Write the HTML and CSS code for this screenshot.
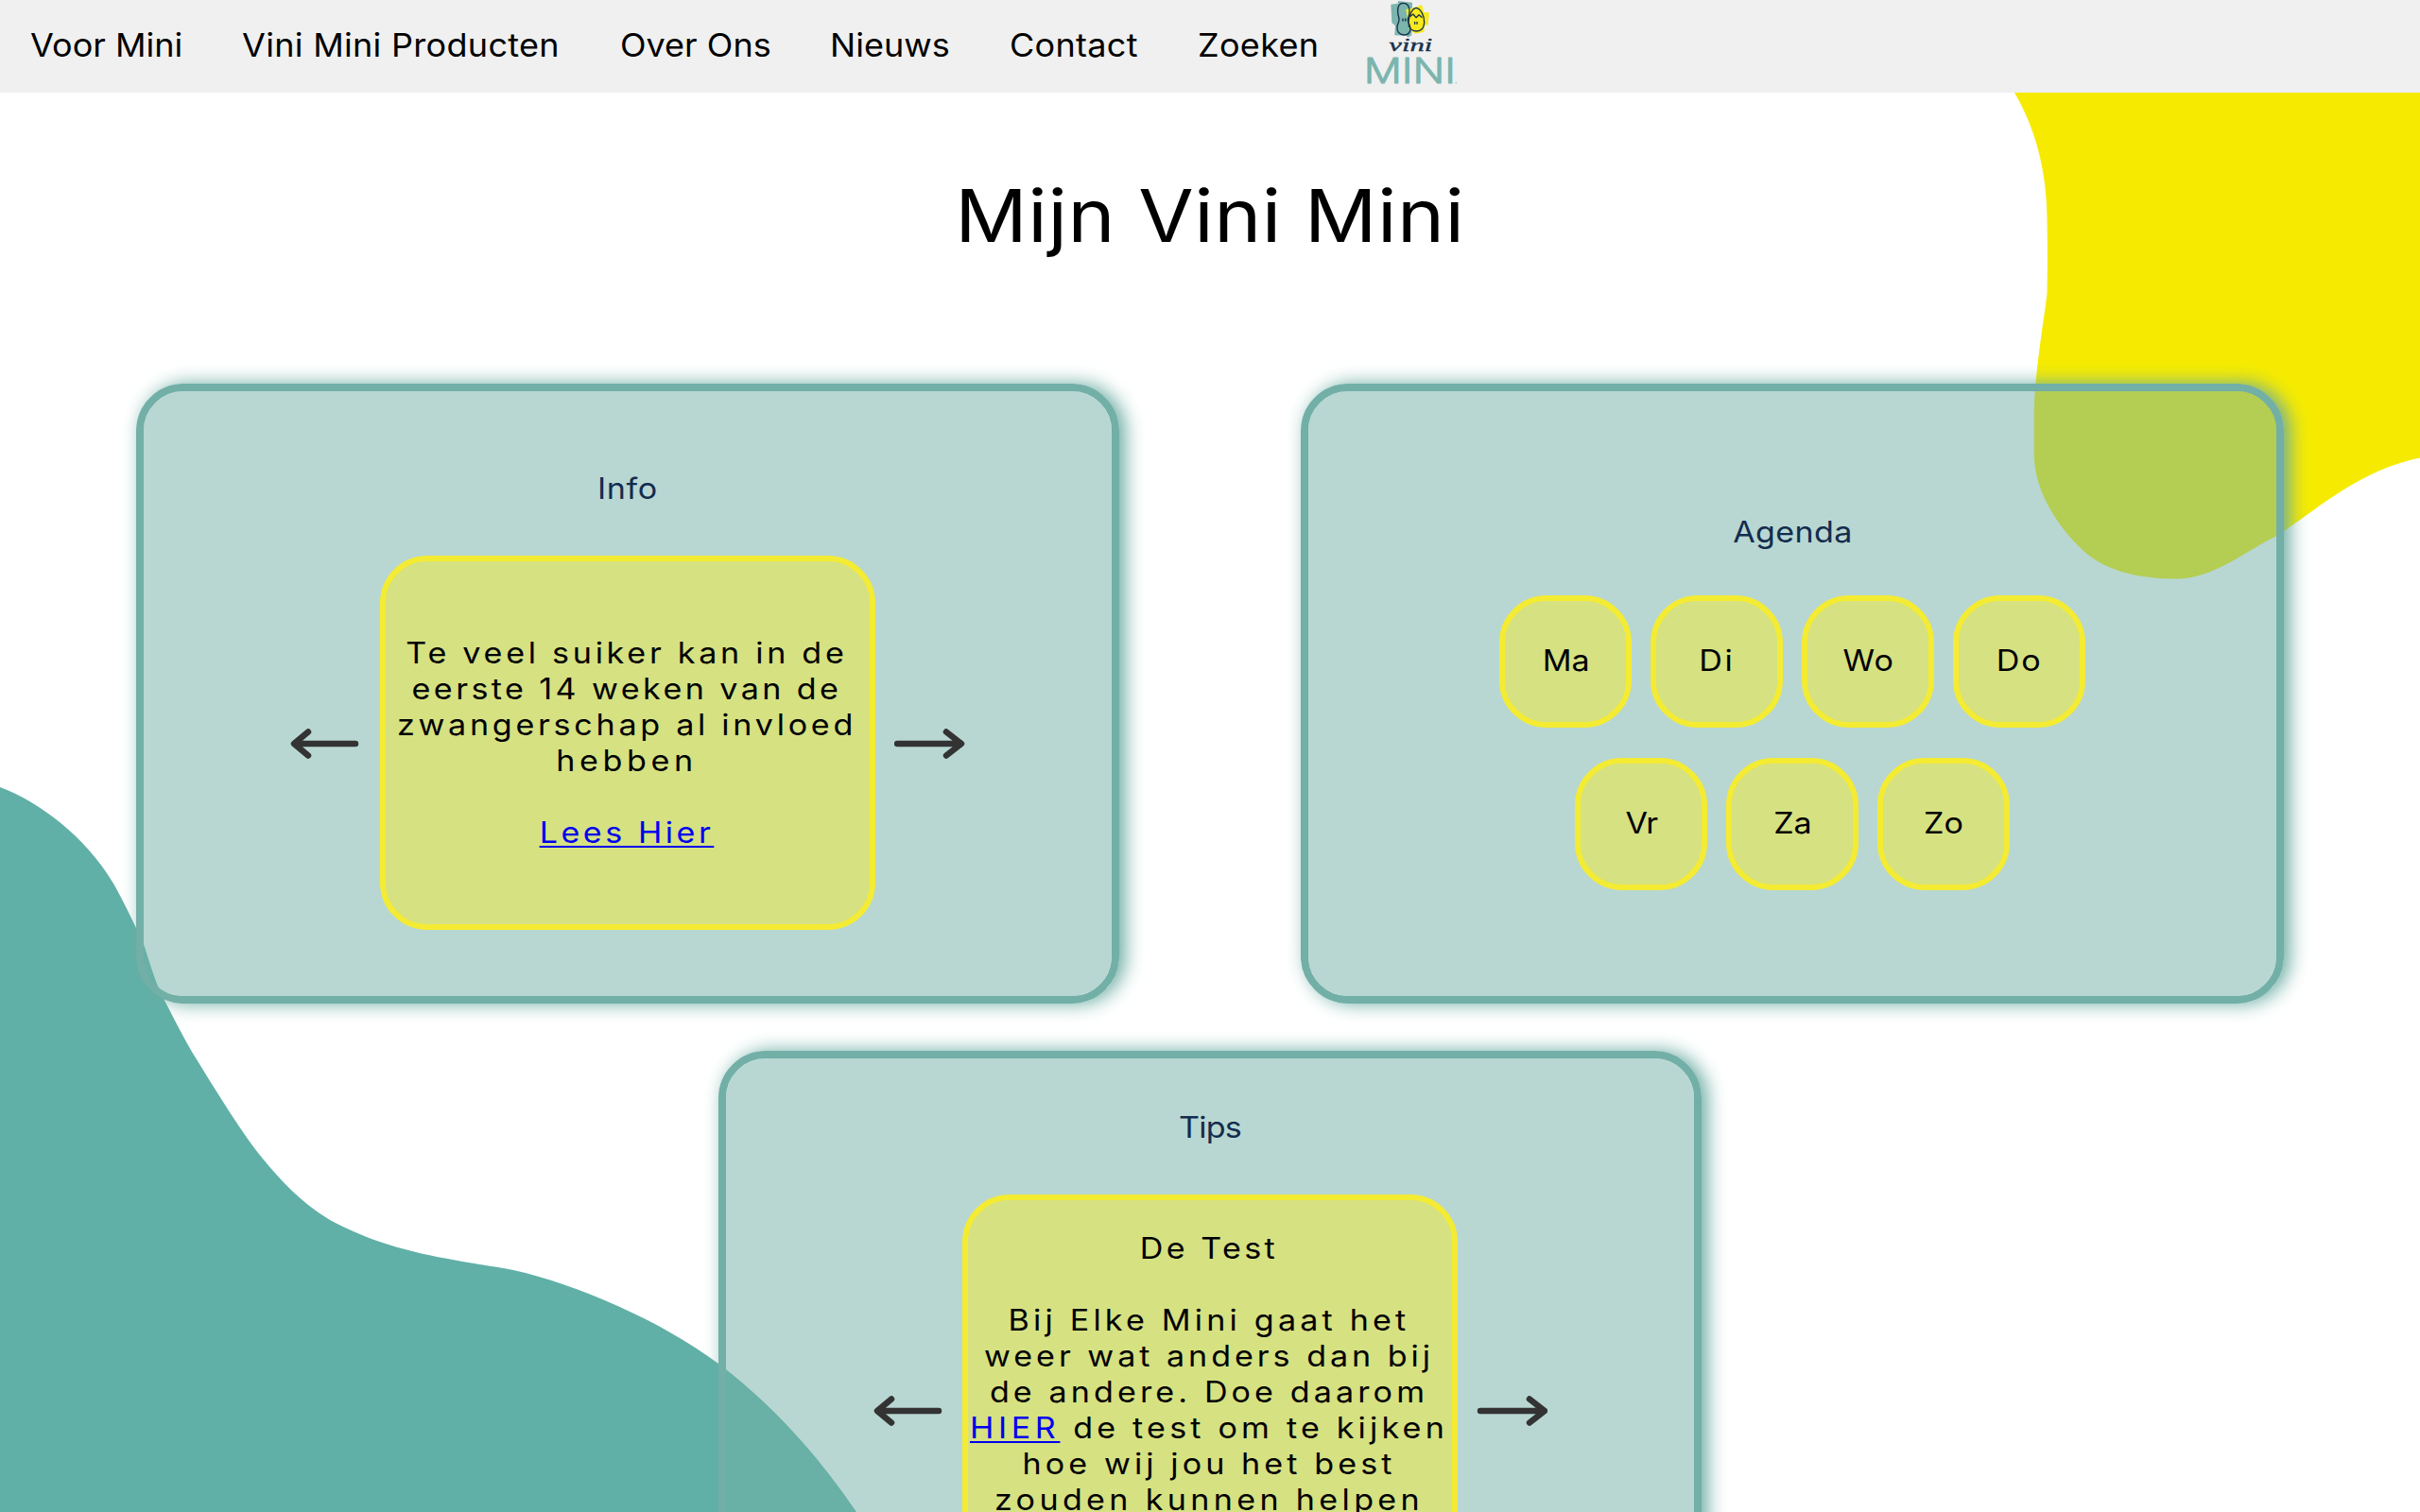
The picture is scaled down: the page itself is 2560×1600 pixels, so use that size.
FILE: index.html
```html
<!DOCTYPE html>
<html lang="nl">
<head>
<meta charset="utf-8">
<title>Mijn Vini Mini</title>
<link rel="stylesheet" href="styles.css">
</head>
<body>
<svg class="blobs" viewBox="0 0 2560 1600" aria-hidden="true">
  <path fill="#f6eb00" d="M2131 98C2146 124 2165 166 2165.500 232C2166 260 2166 285 2165.500 310C2163 335 2151.700 395 2151.700 445V480C2151.700 528 2188 570 2210 588C2230 603 2255 609 2275 611C2290 613 2305 613 2318 611C2352 604 2378 582 2406.700 568C2445 545 2492 498 2560 484.600V98Z"/>
  <path fill="#60b0a7" d="M0 833C40 848 90 884 120 935C132 956 147 988 152 999C158 1018 163 1034 168 1046C176 1063 190 1090 203 1113C226 1150 250 1190 273 1220C305 1260 333 1285 367 1300C425 1327 475 1332 543 1344C610 1359 700 1398 760 1443C820 1489 865 1540 906 1600H0Z"/>
</svg>

<nav class="nav">
  <a class="nav-link"><span class="nav-text">Voor Mini</span></a>
  <a class="nav-link"><span class="nav-text wide">Vini Mini Producten</span></a>
  <a class="nav-link"><span class="nav-text">Over Ons</span></a>
  <a class="nav-link"><span class="nav-text">Nieuws</span></a>
  <a class="nav-link"><span class="nav-text wide">Contact</span></a>
  <a class="nav-link"><span class="nav-text wide">Zoeken</span></a>
  <svg class="logo" viewBox="0 0 390 294" role="img" aria-label="Vini Mini">
    <path fill="#7cb5ad" d="M124 14L146 11L147 3L192 8L190 112L178 119L173 113L136 112L138 82L127 72Z"/>
    <path fill="#f8ea1c" d="M172 30L192 26L222 15L229 39L246 40L242 79L231 81L229 101L202 107L182 92Z"/>
    <path class="logo-line" d="M146 34C146 16 152 10 163 10C176 10 183 20 183 36C183 50 178 54 178 64C178 72 187 80 186 94C184 107 175 111 165 111C150 110 143 100 144 86C145 74 150 72 150 62C150 52 145 48 146 34Z"/>
    <path class="logo-line" d="M205 25C218 27 231 50 230 72C229 90 219 99 205 99C189 99 179 88 180 70C181 50 192 25 205 25ZM186 52L195 45L204 56L213 47L222 55"/>
    <path class="logo-line" d="M162 60V66M170 60V66M200 70V76M207 70V76"/>
    <text class="logo-script" x="118" y="163" textLength="138" lengthAdjust="spacingAndGlyphs">vini</text>
    <text class="logo-word" x="38" y="264" textLength="292" lengthAdjust="spacingAndGlyphs">MINI</text>
    <circle cx="331" cy="263" r="2.500" fill="#a9cdc8"/>
  </svg>
</nav>

<main class="page">
  <h1 class="title">Mijn Vini Mini</h1>
  <div class="cards">
    <section class="card card-info">
      <h2 class="card-title info-title">Info</h2>
      <div class="slider">
        <svg class="arrow" viewBox="0 0 75 34"><path d="M69 18H6M19 5.500L4 18L19 30.500"/></svg>
        <div class="slide">
          <p class="copy">
            <span class="line ls-34">Te veel suiker kan in de</span>
            <span class="line ls-31">eerste 14 weken van de</span>
            <span class="line ls-34">zwangerschap al invloed</span>
            <span class="line ls-42">hebben</span>
            <span class="line"></span>
            <span class="line ls-32"><a class="link" href="#lees">Lees Hier</a></span>
          </p>
        </div>
        <svg class="arrow" viewBox="0 0 75 34"><path d="M3 18H68M55 5.500L71 18L55 30.500"/></svg>
      </div>
    </section>

    <section class="card card-agenda">
      <h2 class="card-title">Agenda</h2>
      <div class="days">
        <div class="day"><span class="day-name">Ma</span></div>
        <div class="day"><span class="day-name ls-25">Di</span></div>
        <div class="day"><span class="day-name ls-10">Wo</span></div>
        <div class="day"><span class="day-name ls-17">Do</span></div>
        <div class="day"><span class="day-name tight">Vr</span></div>
        <div class="day"><span class="day-name">Za</span></div>
        <div class="day"><span class="day-name">Zo</span></div>
      </div>
    </section>

    <section class="card card-tips">
      <h2 class="card-title tips-title">Tips</h2>
      <div class="slider">
        <svg class="arrow" viewBox="0 0 75 34"><path d="M70 18H7M20 5.500L5 18L20 30.500"/></svg>
        <div class="slide slide-tall">
          <p class="copy">
            <span class="line ls-31">De Test</span>
            <span class="line"></span>
            <span class="line ls-38">Bij Elke Mini gaat het</span>
            <span class="line ls-36">weer wat anders dan bij</span>
            <span class="line ls-37">de andere. Doe daarom</span>
            <span class="line ls-38"><a class="link ls-42" href="#test">HIER</a> de test om te kijken</span>
            <span class="line ls-37">hoe wij jou het best</span>
            <span class="line ls-39">zouden kunnen helpen</span>
          </p>
        </div>
        <svg class="arrow" viewBox="0 0 75 34"><path d="M4 18H69M56 5.500L72 18L56 30.500"/></svg>
      </div>
    </section>
  </div>
</main>
</body>
</html>
```
FILE: styles.css
```css
* {
  box-sizing: border-box;
}

html,
body {
  height: 1600px;
  margin: 0;
  overflow: hidden;
}

body {
  position: relative;
  background: #fff;
  color: #000;
  font-family: Inter, "Liberation Sans", sans-serif;
  font-size: 31px;
  line-height: 38px;
}

/* Organic background shapes behind the page */
.blobs {
  position: absolute;
  top: 0;
  left: 0;
  width: 2560px;
  height: 1600px;
  z-index: -1;
}

.nav {
  display: grid;
  grid-template-columns: 224px 400px 222px 190px 199px 163px 130px;
  height: 98px;
  padding-left: 32px;
  background: #f0f0f0;
}

.nav-link {
  font-size: 34px;
  line-height: 96px;
  white-space: nowrap;
}

.nav-text {
  display: inline-block;
  transform: scaleX(1.06);
  transform-origin: left center;
}

.nav-text.wide {
  letter-spacing: 0.27px;
}

.logo {
  width: 130px;
  height: 98px;
}

.logo-line {
  fill: none;
  stroke: #17304c;
  stroke-width: 4;
  stroke-linecap: round;
  stroke-linejoin: round;
}

.logo-script {
  fill: #17304c;
  stroke: #17304c;
  stroke-width: 1;
  font: italic 54px "Liberation Serif", serif;
}

.logo-word {
  fill: #7cb5ad;
  stroke: #7cb5ad;
  stroke-width: 3;
  stroke-linejoin: round;
  font: 300 112px Inter, sans-serif;
}

.title {
  margin: 80px 0 128px;
  font-size: 77px;
  font-weight: 400;
  line-height: 100px;
  letter-spacing: 0.45px;
  text-align: center;
  transform: scaleX(1.1);
}

.cards {
  display: flex;
  flex-wrap: wrap;
  justify-content: center;
  gap: 50px 192px;
}

.card {
  display: flex;
  flex-direction: column;
  align-items: center;
  width: 1040px;
  height: 656px;
  border: 8px solid #72afa7;
  border-radius: 50px;
  background: rgba(114, 175, 166, 0.5);
  background-clip: padding-box;
  box-shadow: 6px 0 20px #6aaba1;
}

.card-info {
  padding-top: 84px;
}

.card-agenda {
  padding-top: 130px;
}

.card-tips {
  padding-top: 54px;
}

.card-title {
  margin: 0 0 52px;
  color: #132c4e;
  font-size: 31px;
  font-weight: 400;
  line-height: 38px;
  letter-spacing: 0.28px;
  transform: scaleX(1.1);
}

.info-title {
  letter-spacing: 0.5px;
}

.tips-title {
  letter-spacing: -0.7px;
}

.card-agenda .card-title {
  margin-bottom: 48px;
}

.slider {
  display: flex;
  align-items: center;
  gap: 20px;
}

.arrow {
  width: 75px;
  height: 34px;
  fill: none;
  stroke: #333;
  stroke-width: 6.5;
  stroke-linecap: round;
  stroke-linejoin: round;
}

.slide {
  display: flex;
  align-items: center;
  justify-content: center;
  width: 524px;
  height: 396px;
  border: 6px solid #f4eb33;
  border-radius: 50px;
  background: rgba(244, 235, 50, 0.5);
  background-clip: padding-box;
}

.slide-tall {
  align-items: flex-start;
  height: 456px;
  padding-top: 32px;
}

.copy {
  margin: 0 2px 0 0;
  text-align: center;
  white-space: nowrap;
  transform: scaleX(1.1);
}

.line {
  display: block;
  height: 38px;
}

.link {
  color: #00e;
  text-decoration-thickness: 2px;
  text-underline-offset: 3px;
}

.days {
  display: flex;
  flex-wrap: wrap;
  justify-content: center;
  gap: 32px 20px;
  width: 640px;
}

.day {
  display: flex;
  align-items: center;
  justify-content: center;
  width: 140px;
  height: 140px;
  padding: 0 0 2px 1px;
  border: 6px solid #f4eb33;
  border-radius: 50px;
  background: rgba(244, 235, 50, 0.5);
  background-clip: padding-box;
}

.day-name {
  transform: scaleX(1.1);
}

.tight { letter-spacing: -1.5px; }
.ls-10 { letter-spacing: 1px; }
.ls-17 { letter-spacing: 1.7px; }
.ls-25 { letter-spacing: 2.5px; }
.ls-31 { letter-spacing: 3.1px; }
.ls-32 { letter-spacing: 3.2px; }
.ls-34 { letter-spacing: 3.38px; }
.ls-36 { letter-spacing: 3.6px; }
.ls-37 { letter-spacing: 3.72px; }
.ls-38 { letter-spacing: 3.8px; }
.ls-39 { letter-spacing: 3.94px; }
.ls-42 { letter-spacing: 4.2px; }
```
